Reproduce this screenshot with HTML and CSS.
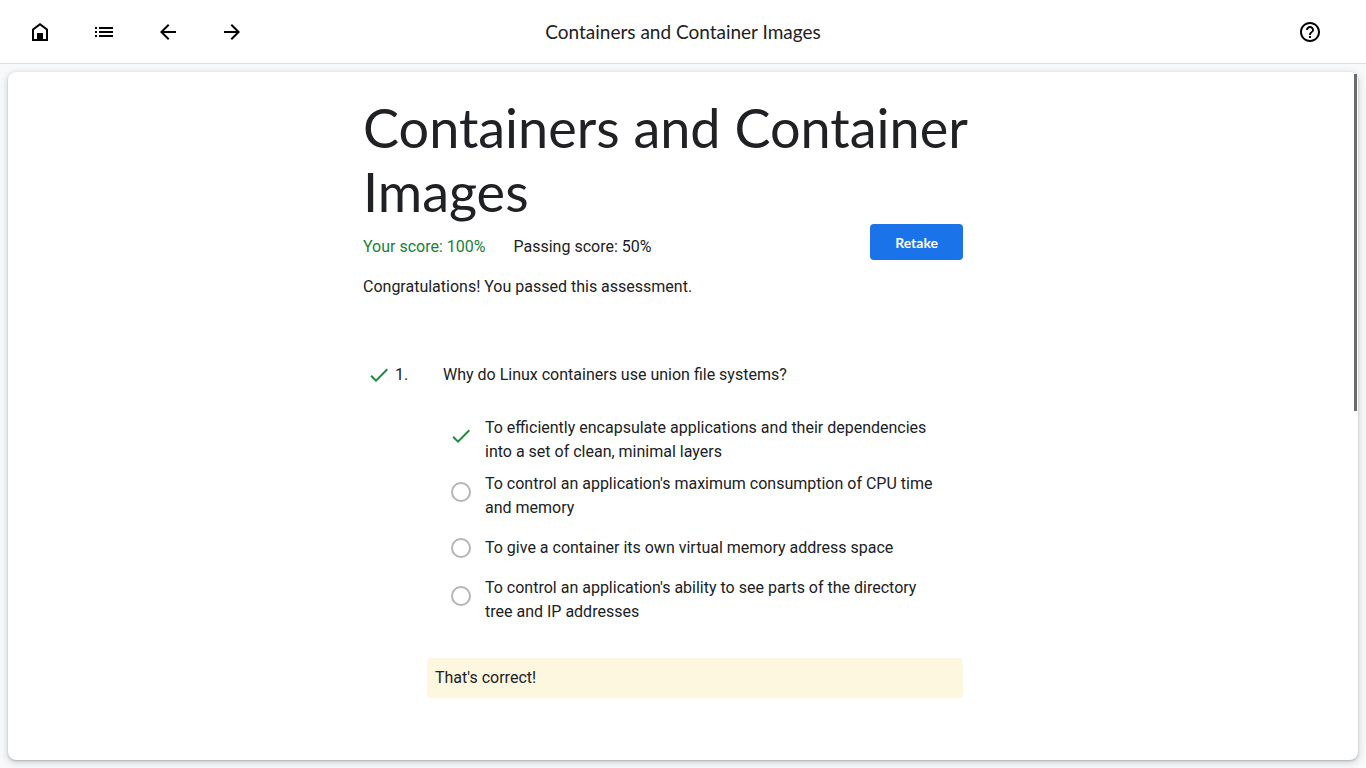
FILE: index.html
```html
<!DOCTYPE html>
<html lang="en">
<head>
<meta charset="utf-8">
<title>Containers and Container Images</title>
<link rel="stylesheet" href="styles.css">
</head>
<body>
<header class="topbar">
  <nav class="topbar-nav" aria-label="Course navigation">
    <button class="icon-button" type="button" aria-label="Home"><svg class="icon" viewBox="0 0 24 24"><path d="M4 21V9l8-6 8 6v12zM6 19h3v-6h6v6h3v-9l-6-4.500L6 10z" fill-rule="evenodd"/><path d="M9 13h6v7H9z"/></svg></button>
    <button class="icon-button" type="button" aria-label="Contents"><svg class="icon" viewBox="0 0 24 24"><path d="M3 7h2v2H3zM3 11h2v2H3zM3 15h2v2H3zM7 7h14v2H7zM7 11h14v2H7zM7 15h14v2H7z"/></svg></button>
    <button class="icon-button" type="button" aria-label="Previous"><svg class="icon" viewBox="0 0 24 24"><path d="M20 11H7.830l5.590-5.590L12 4l-8 8 8 8 1.410-1.410L7.830 13H20z"/></svg></button>
    <button class="icon-button" type="button" aria-label="Next"><svg class="icon" viewBox="0 0 24 24"><path d="M12 4l-1.410 1.410L16.170 11H4v2h12.170l-5.580 5.590L12 20l8-8z"/></svg></button>
  </nav>
  <div class="topbar-title">Containers and Container Images</div>
  <div class="topbar-end">
    <button class="icon-button" type="button" aria-label="Help"><svg class="icon" viewBox="0 0 24 24"><path d="M11 18h2v-2h-2v2zm1-16C6.480 2 2 6.480 2 12s4.480 10 10 10 10-4.480 10-10S17.520 2 12 2zm0 18c-4.410 0-8-3.590-8-8s3.590-8 8-8 8 3.590 8 8-3.590 8-8 8zm0-14c-2.210 0-4 1.790-4 4h2c0-1.100.9-2 2-2s2 .9 2 2c0 2-3 1.750-3 5h2c0-2.250 3-2.500 3-5 0-2.210-1.790-4-4-4z"/></svg></button>
  </div>
</header>
<main class="card">
  <div class="content">
    <h1 class="title">Containers and Container Images</h1>
    <div class="summary">
      <div class="scores">
        <span class="score-yours">Your score: 100%</span>
        <span>Passing score: 50%</span>
      </div>
      <button class="retake" type="button">Retake</button>
    </div>
    <p class="message">Congratulations! You passed this assessment.</p>
    <section class="question">
      <div class="question-head">
        <svg class="icon check" viewBox="0 0 24 24" role="img" aria-label="Correct"><path d="M9 16.170L4.830 12l-1.420 1.410L9 19 21 7l-1.410-1.410z"/></svg>
        <span class="question-number">1.</span>
        <span id="q1">Why do Linux containers use union file systems?</span>
      </div>
      <div class="answers" role="radiogroup" aria-labelledby="q1">
        <label class="answer">
          <span class="mark"><input class="radio" type="radio" name="q1" checked><svg class="icon check mark-check" viewBox="0 0 24 24" aria-hidden="true"><path d="M9 16.170L4.830 12l-1.420 1.410L9 19 21 7l-1.410-1.410z"/></svg></span>
          <span class="answer-text">To efficiently encapsulate applications and their dependencies into a set of clean, minimal layers</span>
        </label>
        <label class="answer">
          <span class="mark"><input class="radio" type="radio" name="q1"></span>
          <span class="answer-text">To control an application's maximum consumption of CPU time and memory</span>
        </label>
        <label class="answer">
          <span class="mark"><input class="radio" type="radio" name="q1"></span>
          <span class="answer-text">To give a container its own virtual memory address space</span>
        </label>
        <label class="answer">
          <span class="mark"><input class="radio" type="radio" name="q1"></span>
          <span class="answer-text">To control an application's ability to see parts of the directory tree and IP addresses</span>
        </label>
      </div>
      <p class="feedback">That's correct!</p>
    </section>
  </div>
  <div class="scroll-thumb"></div>
</main>
</body>
</html>
```
FILE: styles.css
```css
* {
  box-sizing: border-box;
}

body {
  margin: 0;
  min-height: 100vh;
  display: flex;
  flex-direction: column;
  background: #f8f9fa;
  color: #202124;
  font-family: Roboto, "Liberation Sans", sans-serif;
  font-size: 16px;
  line-height: 24px;
}

.topbar {
  display: grid;
  grid-template-columns: 1fr auto 1fr;
  align-items: center;
  height: 64px;
  padding: 0 32px 0 16px;
  background: #fff;
  border-bottom: 1px solid #dadce0;
}

.topbar-nav {
  display: flex;
  gap: 16px;
}

.topbar-title {
  font-family: Lato, sans-serif;
  font-size: 19px;
  padding-left: 16px;
}

.topbar-end {
  display: flex;
  justify-content: flex-end;
}

.icon-button {
  display: grid;
  place-items: center;
  width: 48px;
  height: 48px;
  padding: 0;
  border: 0;
  background: none;
  color: #000;
  cursor: pointer;
}

.icon {
  display: block;
  width: 24px;
  height: 24px;
  fill: currentColor;
}

.card {
  position: relative;
  flex: 1;
  margin: 8px;
  padding: 24px;
  border-radius: 8px;
  background: #fff;
  box-shadow: 0 1px 2px rgba(60, 64, 67, 0.3), 0 2px 6px 2px rgba(60, 64, 67, 0.15);
}

.content {
  max-width: 640px;
  margin: 0 auto;
}

.title {
  margin: 0;
  font-family: Lato, sans-serif;
  font-size: 54px;
  font-weight: 400;
  line-height: 64px;
}

.summary {
  display: flex;
  align-items: flex-start;
  justify-content: space-between;
  padding-right: 40px;
}

.scores {
  display: flex;
  gap: 28px;
  padding-top: 11px;
}

.score-yours {
  color: #188038;
}

.retake {
  flex: none;
  height: 36px;
  padding: 0 25px;
  border: 0;
  border-radius: 4px;
  background: #1a73e8;
  color: #fff;
  font-family: Lato, sans-serif;
  font-size: 14px;
  font-weight: 700;
  cursor: pointer;
}

.message {
  margin: 15px 0 64px;
}

.question {
  padding-right: 40px;
}

.question-head {
  display: grid;
  grid-template-columns: 24px 44px 1fr;
  column-gap: 4px;
  padding-left: 4px;
}

.check {
  color: #1e8e3e;
}

.answers {
  display: flex;
  flex-direction: column;
  gap: 8px;
  padding: 29px 16px 0 78px;
}

.answer {
  display: flex;
  gap: 4px;
}

.mark {
  flex: none;
  display: grid;
  place-items: center;
  width: 40px;
  height: 40px;
}

.radio {
  grid-area: 1 / 1;
  appearance: none;
  width: 20px;
  height: 20px;
  margin: 0;
  border: 2px solid #b5b5b5;
  border-radius: 50%;
}

.radio:checked {
  opacity: 0;
}

.mark-check {
  grid-area: 1 / 1;
}

.answer-text {
  align-self: center;
}

.feedback {
  margin: 34px 0 0 64px;
  padding: 8px;
  border-radius: 4px;
  background: #fef7e0;
}

.scroll-thumb {
  position: absolute;
  top: 2px;
  right: 1px;
  width: 3px;
  height: 49%;
  background: #6b6b6b;
}
```
